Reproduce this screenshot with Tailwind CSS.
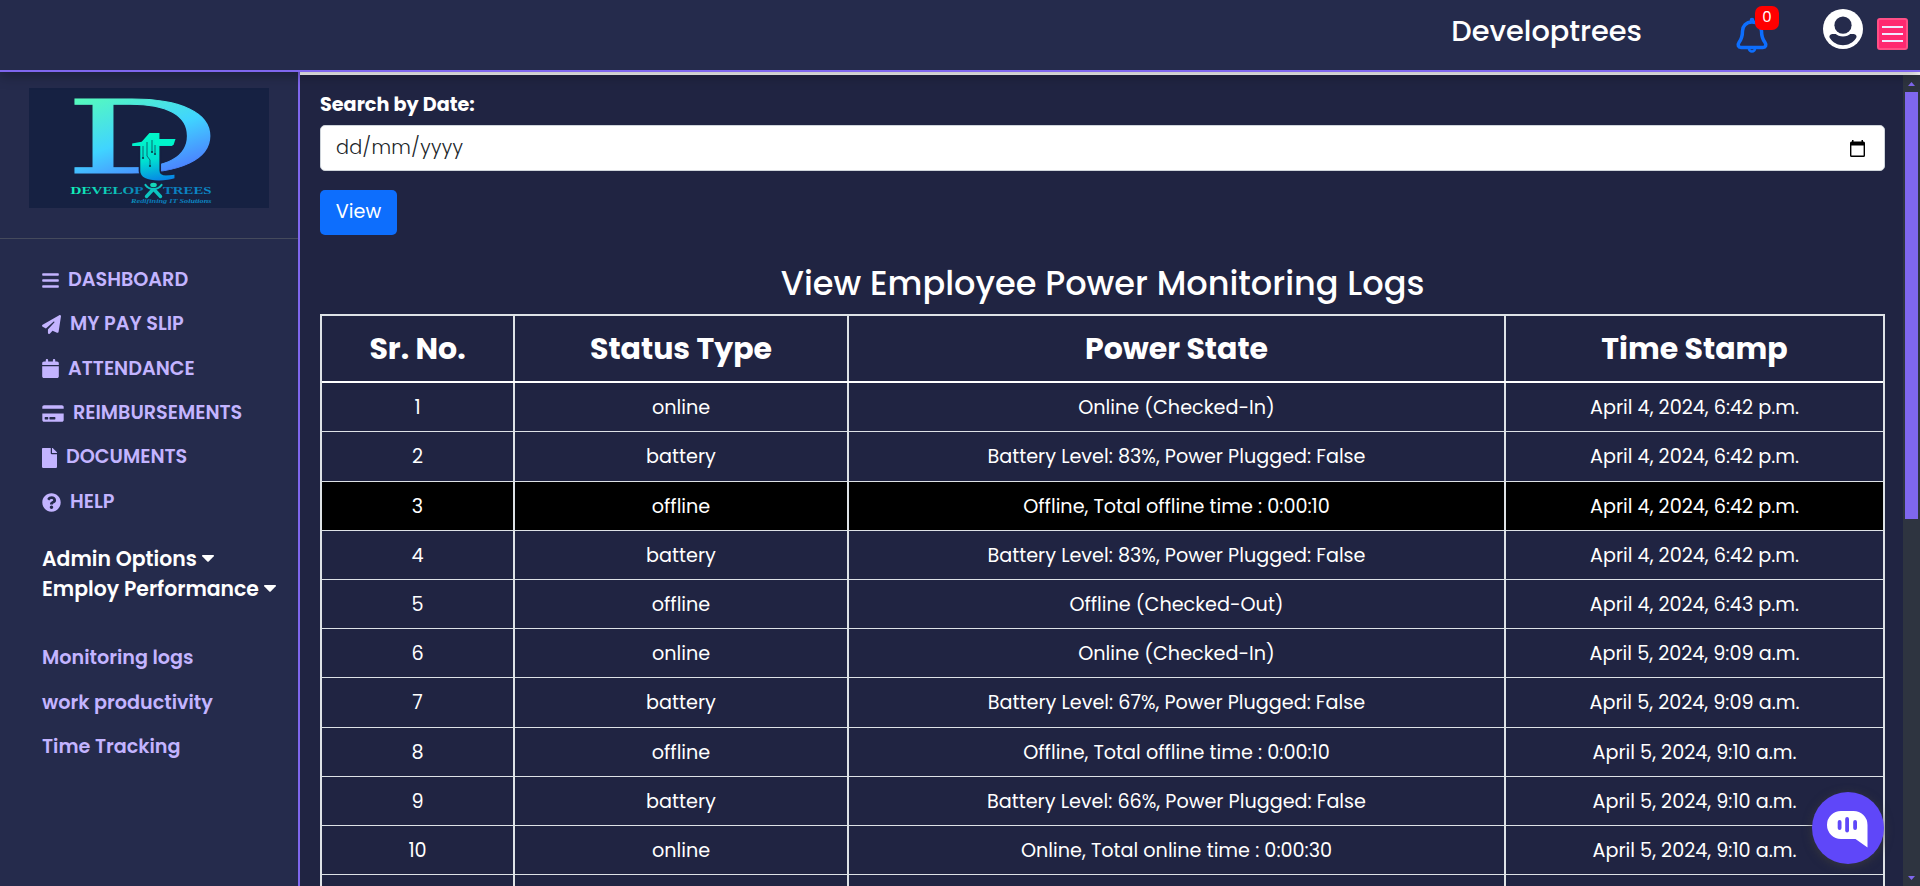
<!DOCTYPE html>
<html lang="en">
<head>
<meta charset="utf-8">
<title>Developtrees - Power Monitoring Logs</title>
<script src="https://cdn.jsdelivr.net/npm/@tailwindcss/browser@4"></script>
</head>
<body class="h-[886px] w-[1920px] overflow-hidden bg-[#202442] font-['Poppins','Inter',sans-serif] text-[19.2px] text-white">
<div class="flex h-full flex-col">
  <header class="relative z-20 flex h-[72px] shrink-0 items-start justify-end border-b-2 border-[#7f67ee] bg-[#252b4c] shadow-[0_4px_12px_rgba(0,0,0,0.28)]">
    <h1 class="mt-[9px] mr-[92px] text-[28.8px] leading-[44px] font-medium">Developtrees</h1>
    <div class="relative mt-[17px] mr-[53px] size-9">
      <svg class="size-9" viewBox="0 0 36 36" fill="none" stroke="#0d6efd" stroke-width="3.5" stroke-linejoin="round"><path d="M18 5C12 5 8.500 9.500 8.500 14c0 5-.5 7.500-3.500 11.500-1.700 2.500-.7 5 2 5h22c2.700 0 3.700-2.500 2-5-3-4-3.500-6.500-3.500-11.500C27.500 9.500 24 5 18 5z"/><path d="M15 31.500a3 3 0 0 0 6 0" stroke-width="2.600"/><circle cx="18" cy="3" r="1" stroke-width="2.600"/></svg>
      <span class="absolute -top-[11px] left-[21px] flex size-6 items-start justify-center rounded-[7px] bg-[#ff0000] text-[15px] leading-[22px]">0</span>
    </div>
    <svg class="mt-[9px] mr-[14px] size-10" viewBox="0 0 40 40"><circle cx="20" cy="20" r="20" fill="#fff"/><path d="M10 25h20c3 0 4.600 2.200 2.800 4.500C30 33.500 25.500 36.200 20 36.200S10 33.500 7.200 29.500C5.400 27.200 7 25 10 25z" fill="#252b4c"/><circle cx="20" cy="16.200" r="11.300" fill="#fff"/><circle cx="20" cy="16.200" r="8.600" fill="#252b4c"/></svg>
    <button class="mt-[18px] mr-3 flex h-8 w-[31px] flex-col items-center justify-center gap-[5px] rounded-[3px] border-2 border-[#ff4f86] bg-[#ff2870]">
      <span class="h-[2px] w-[21px] bg-[#f0e8ff]"></span><span class="h-[2px] w-[21px] bg-[#f0e8ff]"></span><span class="h-[2px] w-[21px] bg-[#f0e8ff]"></span>
    </button>
  </header>

  <div class="flex min-h-0 flex-1">
    <aside class="flex w-[300px] shrink-0 flex-col border-r-2 border-[#7f67ee] bg-[#252b4c]">
      <div class="h-[167px] border-b border-[#454a5c] pt-4 pl-[29px]">
        <svg class="h-[120px] w-[240px] overflow-visible bg-[#162142]" viewBox="0 0 240 120">
          <defs>
            <linearGradient id="gd" gradientUnits="userSpaceOnUse" x1="0" y1="-75" x2="58" y2="12"><stop offset="0" stop-color="#58ffb5"/><stop offset=".52" stop-color="#40d4ff"/><stop offset=".9" stop-color="#4c7dff"/></linearGradient>
            <linearGradient id="gt" gradientUnits="userSpaceOnUse" x1="6" y1="-50" x2="24" y2="2"><stop offset="0" stop-color="#00ffc8"/><stop offset=".55" stop-color="#00e0d0"/><stop offset="1" stop-color="#0878ea"/></linearGradient>
            <linearGradient id="gw" gradientUnits="userSpaceOnUse" x1="42" y1="0" x2="182" y2="0"><stop offset="0" stop-color="#10f0b8"/><stop offset=".3" stop-color="#0cc8b8"/><stop offset=".5" stop-color="#0878b8"/><stop offset="1" stop-color="#0c88c8"/></linearGradient>
          </defs>
          <text transform="translate(35.500 85) scale(1.950 1.020)" font-family="DejaVu Serif" font-size="100" fill="url(#gd)" stroke="url(#gd)" stroke-width=".8">D</text>
          <text transform="translate(101 92) scale(1.650 1)" font-family="Liberation Serif" font-weight="700" font-size="82" fill="url(#gt)" stroke="#162142" stroke-width="2" paint-order="stroke">t</text>
          <path d="M126 51h20.500l-2 6H126z" fill="#00f5cb"/>
          <g stroke="#0b4a5c" stroke-width=".8" fill="none"><path d="M114 58v12M118 54v14l3 4v6M123 52v12M126 57v8"/></g>
          <g fill="#0b3a4c"><circle cx="114" cy="70" r="1.100"/><circle cx="121" cy="78" r="1.100"/><circle cx="123" cy="64" r="1.100"/><circle cx="126" cy="66" r="1.100"/></g>
          <text x="41.500" y="106" font-family="Liberation Serif" font-weight="700" font-size="10" textLength="73" lengthAdjust="spacingAndGlyphs" fill="url(#gw)">DEVELOP</text>
          <text x="134" y="106" font-family="Liberation Serif" font-weight="700" font-size="10" textLength="48.500" lengthAdjust="spacingAndGlyphs" fill="url(#gw)">TREES</text>
          <g fill="none" stroke="#0cc4c0" stroke-linecap="round"><path d="M116.500 97c2 3 4.500 4 8 4s6-1 8-4" stroke-width="2.200"/><path d="M123.500 102l-6 6.500M125.500 102l6 6.500" stroke-width="3.400"/></g>
          <ellipse cx="124.500" cy="97" rx="3.300" ry="2.200" fill="#14d8b8"/>
          <text x="102" y="114.500" font-family="Liberation Serif" font-style="italic" font-weight="700" font-size="5.500" textLength="80.500" lengthAdjust="spacingAndGlyphs" fill="url(#gw)">Redifining IT Solutions</text>
        </svg>
      </div>

      <nav class="flex flex-col pt-[19px] pl-[42px] font-semibold text-[#c3b4ff]">
        <a class="flex h-[44.4px] items-center gap-[9px]"><svg class="h-[19px] w-[17px]" viewBox="0 0 448 512" fill="currentColor"><rect y="62" width="448" height="68" rx="20"/><rect y="222" width="448" height="68" rx="20"/><rect y="382" width="448" height="68" rx="20"/></svg><span>DASHBOARD</span></a>
        <a class="flex h-[44.4px] items-center gap-[9px]"><svg class="size-[19px] shrink-0" viewBox="0 0 512 512" fill="currentColor"><path d="M498.100 5.600c10.100 7 15.400 19.100 13.500 31.200l-64 416c-1.500 9.700-7.400 18.200-16 23s-18.900 5.400-28 1.600L284 427.700l-68.500 74.100c-8.900 9.700-22.900 12.900-35.200 8.100S160 493.200 160 480V396.400c0-4 1.500-7.800 4.200-10.700L331.800 202.800c5.800-6.300 5.600-16-.4-22s-15.700-6.400-22-.7L106 360.800 17.700 316.600C7.100 311.300.3 300.700 0 288.900s5.900-22.800 16.100-28.700l448-256c10.700-6.100 23.900-5.500 34 1.400z"/></svg><span>MY PAY SLIP</span></a>
        <a class="flex h-[44.4px] items-center gap-[9px]"><svg class="h-[19px] w-[17px] shrink-0" viewBox="0 0 448 512" fill="currentColor"><path d="M96 32V64H48C21.500 64 0 85.500 0 112v48H448V112c0-26.500-21.500-48-48-48H352V32c0-17.700-14.300-32-32-32s-32 14.300-32 32V64H160V32c0-17.700-14.300-32-32-32S96 14.300 96 32zM448 192H0V464c0 26.500 21.500 48 48 48H400c26.500 0 48-21.500 48-48V192z"/></svg><span>ATTENDANCE</span></a>
        <a class="flex h-[44.4px] items-center gap-[9px]"><svg class="h-[19px] w-[22px] shrink-0" viewBox="0 0 576 512" fill="currentColor"><path fill-rule="evenodd" d="M0 432c0 26.500 21.500 48 48 48h480c26.500 0 48-21.500 48-48V256H0v176zm192-68c0-6.600 5.400-12 12-12h136c6.600 0 12 5.400 12 12v40c0 6.600-5.400 12-12 12H204c-6.600 0-12-5.400-12-12v-40zm-128 0c0-6.600 5.400-12 12-12h72c6.600 0 12 5.400 12 12v40c0 6.600-5.400 12-12 12H76c-6.600 0-12-5.400-12-12v-40zM576 80v48H0V80c0-26.500 21.500-48 48-48h480c26.500 0 48 21.500 48 48z"/></svg><span>REIMBURSEMENTS</span></a>
        <a class="flex h-[44.4px] items-center gap-[9px]"><svg class="h-[20px] w-[15px] shrink-0" viewBox="0 0 384 512" fill="currentColor"><path d="M224 136V0H24C10.700 0 0 10.700 0 24v464c0 13.300 10.700 24 24 24h336c13.300 0 24-10.700 24-24V160H248c-13.200 0-24-10.800-24-24zm160-14.100v6.100H256V0h6.100c6.400 0 12.500 2.500 17 7l97.900 98c4.500 4.500 7 10.600 7 16.900z"/></svg><span>DOCUMENTS</span></a>
        <a class="flex h-[44.4px] items-center gap-[9px]"><svg class="size-[19px] shrink-0" viewBox="0 0 512 512" fill="currentColor"><path d="M504 256c0 137-111 248-248 248S8 393 8 256C8 119 119 8 256 8s248 111 248 248zM262.700 90c-54.500 0-89.300 23-116.500 63.800-3.500 5.300-2.400 12.400 2.700 16.300l34.700 26.300c5.200 3.900 12.600 3 16.700-2.100 17.900-22.700 30.100-35.800 57.300-35.800 20.400 0 45.700 13.100 45.700 33 0 15-12.400 22.700-32.500 34C247.100 238.500 216 254.900 216 296v4c0 6.600 5.400 12 12 12h56c6.600 0 12-5.400 12-12v-1.300c0-28.500 83.200-29.600 83.200-106.700 0-58-60.200-102-116.500-102zM256 338c-25.400 0-46 20.600-46 46s20.600 46 46 46 46-20.600 46-46-20.600-46-46-46z"/></svg><span>HELP</span></a>
      </nav>

      <div class="mt-[19.5px] flex flex-col pl-[42px] text-[20.4px] leading-[30px] font-semibold">
        <a class="flex items-center gap-[5px]"><span>Admin Options</span><svg class="h-[7px] w-3" viewBox="0 0 12 7" fill="currentColor"><path d="M.8 0h10.400c.8 0 1 .7.600 1.200L6.700 6.500c-.4.400-1 .4-1.400 0L.2 1.200C-.2.700 0 0 .8 0z"/></svg></a>
        <a class="flex items-center gap-[5px]"><span class="whitespace-nowrap">Employ Performance</span><svg class="h-[7px] w-3 shrink-0" viewBox="0 0 12 7" fill="currentColor"><path d="M.8 0h10.400c.8 0 1 .7.600 1.200L6.700 6.500c-.4.400-1 .4-1.400 0L.2 1.200C-.2.700 0 0 .8 0z"/></svg></a>
      </div>

      <div class="mt-[32.5px] flex flex-col pl-[42px] leading-[44.4px] font-semibold text-[#c3b4ff]">
        <a>Monitoring logs</a>
        <a>work productivity</a>
        <a>Time Tracking</a>
      </div>
    </aside>

    <div class="flex min-w-0 flex-1 border-t-[3px] border-white">
      <main class="min-w-0 flex-1 overflow-hidden pt-[15px] pr-[18px] pl-5">
        <label class="mb-[6px] block leading-[29px] font-bold">Search by Date:</label>
        <div class="flex h-[46px] items-center justify-between rounded-[5px] border border-[#ced4da] bg-white pr-[19px] pl-[15px] text-[#212529]">
          <span class="font-light tracking-[0.35px]">dd/mm/yyyy</span>
          <svg class="h-[17px] w-[15px]" viewBox="0 0 15 17" fill="#000"><path fill-rule="evenodd" d="M2 0h1.500v1.500h8V0H13v1.500h.5A1.500 1.500 0 0 1 15 3v12.500a1.500 1.500 0 0 1-1.500 1.500h-12A1.500 1.500 0 0 1 0 15.500V3a1.500 1.500 0 0 1 1.500-1.500H2zM1.400 5.500v10.100h12.200V5.500z"/></svg>
        </div>
        <button class="mt-[19px] block h-[45px] w-[77px] rounded-[5px] bg-[#0d6efd] pb-[1px]">View</button>
        <h2 class="mt-[29px] mb-[10px] text-center text-[33.6px] leading-10 font-medium">View Employee Power Monitoring Logs</h2>
        <div id="logs" class="border-x-2 border-t-2 border-[#dee2e6]">
          <div class="grid h-[67.2px] grid-cols-[193px_334px_657px_377px] border-b-2 border-white text-center text-[30px] leading-[65px] font-bold">
            <div class="border-r-2 border-[#dee2e6]">Sr. No.</div>
            <div class="border-r-2 border-[#dee2e6]">Status Type</div>
            <div class="border-r-2 border-[#dee2e6]">Power State</div>
            <div>Time Stamp</div>
          </div>
        </div>
      </main>
      <div class="flex w-[17px] flex-col items-center justify-between bg-[#2e3440] pt-[7px] pb-[6px]">
        <div class="flex flex-col items-center gap-[6px]">
          <svg class="h-[4px] w-[7px]" viewBox="0 0 7 4" fill="#7f67ee"><path d="M0 4 3.500 0 7 4z"/></svg>
          <div class="h-[427px] w-[13px] bg-[#7f67ee]"></div>
        </div>
        <svg class="h-[4px] w-[7px]" viewBox="0 0 7 4" fill="#7f67ee"><path d="M0 0h7L3.500 4z"/></svg>
      </div>
    </div>
  </div>
</div>

<button class="fixed top-[792px] left-[1812px] z-30 size-[72px] rounded-full bg-[#5f47f9] shadow-[0_2px_10px_rgba(60,60,60,0.8)]">
  <svg class="size-[72px]" viewBox="0 0 72 72"><path d="M29 19h12.500a14 14 0 0 1 14 14v22.500L43.500 47H29a14 14 0 0 1 0-28z" fill="#fff"/><g fill="#5f47f9"><rect x="25.700" y="28" width="3.800" height="10" rx="1.900"/><rect x="33.200" y="25" width="3.800" height="15.500" rx="1.900"/><rect x="41.200" y="28" width="3.800" height="10" rx="1.900"/></g></svg>
</button>

<script>
  const rows = [
    ['online', 'Online (Checked-In)', 'April 4, 2024, 6:42 p.m.'],
    ['battery', 'Battery Level: 83%, Power Plugged: False', 'April 4, 2024, 6:42 p.m.'],
    ['offline', 'Offline, Total offline time : 0:00:10', 'April 4, 2024, 6:42 p.m.'],
    ['battery', 'Battery Level: 83%, Power Plugged: False', 'April 4, 2024, 6:42 p.m.'],
    ['offline', 'Offline (Checked-Out)', 'April 4, 2024, 6:43 p.m.'],
    ['online', 'Online (Checked-In)', 'April 5, 2024, 9:09 a.m.'],
    ['battery', 'Battery Level: 67%, Power Plugged: False', 'April 5, 2024, 9:09 a.m.'],
    ['offline', 'Offline, Total offline time : 0:00:10', 'April 5, 2024, 9:10 a.m.'],
    ['battery', 'Battery Level: 66%, Power Plugged: False', 'April 5, 2024, 9:10 a.m.'],
    ['online', 'Online, Total online time : 0:00:30', 'April 5, 2024, 9:10 a.m.'],
    ['', '', '']
  ];
  document.getElementById('logs').insertAdjacentHTML('beforeend', rows.map(([status, power, time], i) => `
    <div class="grid h-[49.2px] grid-cols-[193px_334px_657px_377px] border-b border-[#dee2e6] text-center leading-[50px] ${i === 2 ? 'bg-black' : ''}">
      <div class="h-[48.2px] border-r-2 border-[#dee2e6]">${status ? i + 1 : ''}</div>
      <div class="h-[48.2px] border-r-2 border-[#dee2e6]">${status}</div>
      <div class="h-[48.2px] border-r-2 border-[#dee2e6]">${power}</div>
      <div class="h-[48.2px]">${time}</div>
    </div>`).join(''));
</script>
</body>
</html>
